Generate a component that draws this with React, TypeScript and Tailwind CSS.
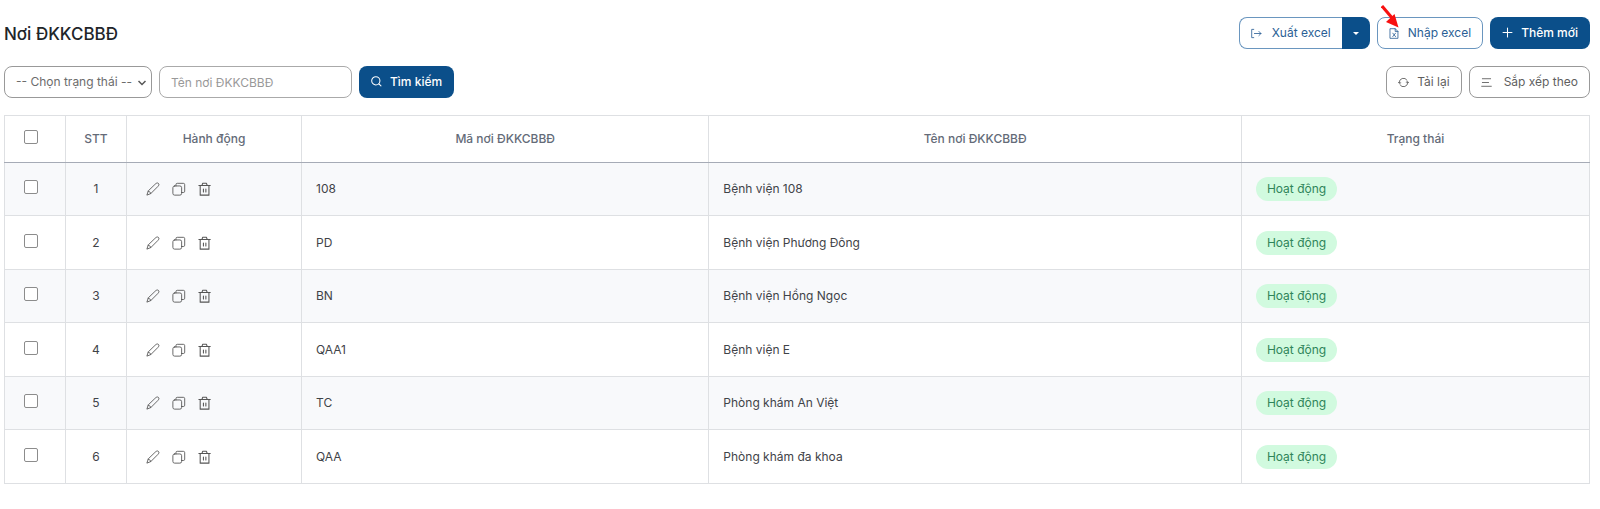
import React, { useState } from "react";

type Place = { id: number; code: string; name: string };

const PLACES: Place[] = [
  { id: 1, code: "108", name: "Bệnh viện 108" },
  { id: 2, code: "PD", name: "Bệnh viện Phương Đông" },
  { id: 3, code: "BN", name: "Bệnh viện Hồng Ngọc" },
  { id: 4, code: "QAA1", name: "Bệnh viện E" },
  { id: 5, code: "TC", name: "Phòng khám An Việt" },
  { id: 6, code: "QAA", name: "Phòng khám đa khoa" },
];

function Icon({ children, className = "size-3.5" }: { children: React.ReactNode; className?: string }) {
  return (
    <svg
      viewBox="0 0 16 16"
      className={`${className} shrink-0`}
      fill="none"
      stroke="currentColor"
      strokeLinecap="round"
      strokeLinejoin="round"
      aria-hidden="true"
    >
      {children}
    </svg>
  );
}

const ExportIcon = () => (
  <Icon className="size-[11px]">
    <path d="M4 2H1v12h3M5 8h9.500M11.500 5l3 3-3 3" strokeWidth="1.200" />
  </Icon>
);

const FileExcelIcon = () => (
  <Icon className="size-[11px]">
    <path d="M2 1h7l4 4v10H2zM9 1v4h4M5.500 7.500l4 5M9.500 7.500l-4 5" strokeWidth="1.200" />
  </Icon>
);

const PlusIcon = () => (
  <Icon className="size-[11px]">
    <path d="M8 1.500v13M1.500 8h13" strokeWidth="1.500" />
  </Icon>
);

const SearchIcon = () => (
  <Icon className="size-[11px]">
    <circle cx="7" cy="7" r="6" strokeWidth="1.500" />
    <path d="m11.500 11.500 3 3" strokeWidth="1.500" />
  </Icon>
);

const ReloadIcon = () => (
  <Icon className="size-[11px]">
    <path d="M1.800 8.500A6.200 6.200 0 0 1 13.200 4.700M14.200 7.500A6.200 6.200 0 0 1 2.800 11.300" strokeWidth="1.300" />
    <path d="m12 7.500 2.300-.5 1.200 1.500M.500 7.500l1.300 1.500 2.200-.5" strokeWidth="1.300" />
  </Icon>
);

const SortIcon = () => (
  <Icon className="size-[11px]">
    <path d="M2 2.500h12M2 8h9M1 13.500h14" strokeWidth="1.300" />
  </Icon>
);

const PencilIcon = () => (
  <Icon>
    <path d="M10.500 2.500c1.200-1.200 2.500-2 3.700-.9s.4 2.500-.8 3.700L5.500 13.200 1 15l1.500-4.500zM2.500 10.500c1.500.2 2.700 1.200 3 2.700" />
  </Icon>
);

const CopyIcon = () => (
  <Icon>
    <rect x="1" y="4.500" width="10" height="10.500" rx="2" />
    <path d="M4.500 4.500V3c0-1 .5-1.500 1.500-1.500h7c1 0 1.500.5 1.500 1.500v7.500c0 1-.5 1.500-1.500 1.500h-2" />
  </Icon>
);

const TrashIcon = () => (
  <Icon>
    <path d="M1 4h13M2.500 4v11h10V4M4.500 4l.8-2.500h4.400l.8 2.500M6.200 8v3.500M9 8v3.500" strokeWidth="1.200" />
  </Icon>
);

function Checkbox({ label }: { label: string }) {
  return (
    <input
      type="checkbox"
      aria-label={label}
      className="block size-3.5 mb-1 appearance-none rounded-xs border border-[#8c8c8c] bg-white checked:bg-[#0b4f8a]"
    />
  );
}

const outline = "flex h-8 items-center rounded-lg border bg-white px-[11px]";
const solid = "flex h-8 items-center gap-2 rounded-lg bg-[#0b4f8a] px-3 pb-px font-medium text-white";

export default function App() {
  const [status, setStatus] = useState("");
  const [keyword, setKeyword] = useState("");

  return (
    <div className="bg-white pl-1 pr-2.5 pb-6 font-[Inter,sans-serif] text-xs leading-5 text-[#3f4348]">
      <header className="flex items-start justify-between pt-4">
        <h1 className="pt-1 text-[17px] leading-7 font-medium text-[#212529]">Nơi ĐKKCBBĐ</h1>
        <div className="flex gap-[7px] pt-px text-[#2b5f95]">
          <div className="flex">
            <button
              type="button"
              className="flex h-8 items-center gap-2.5 rounded-l-lg border border-r-0 border-[#6a96bf] px-[11px]"
            >
              <ExportIcon />
              Xuất excel
            </button>
            <button
              type="button"
              aria-label="Tùy chọn xuất"
              className="flex h-8 w-7 items-center justify-center rounded-r-lg bg-[#0b4f8a] text-white"
            >
              <svg viewBox="0 0 6 3" className="h-[3px] w-1.5" fill="currentColor" aria-hidden="true">
                <path d="M0 0h6L3 3z" />
              </svg>
            </button>
          </div>
          <div className="relative">
            <button type="button" className={`${outline} gap-2 border-[#6a96bf]`}>
              <FileExcelIcon />
              Nhập excel
            </button>
            <svg viewBox="0 0 20 24" className="absolute -top-3 left-1 h-6 w-5" aria-hidden="true">
              <path d="m1 1 11 13" stroke="#f81010" strokeWidth="3" />
              <path d="M17.500 22.500 5 17l8.500-8z" fill="#f81010" />
            </svg>
          </div>
          <button type="button" className={solid}>
            <PlusIcon />
            Thêm mới
          </button>
        </div>
      </header>

      <div className="mt-[17px] flex items-center justify-between">
        <form className="flex gap-[7px]" onSubmit={(e) => e.preventDefault()}>
          <div className="relative">
            <select
              aria-label="Trạng thái"
              value={status}
              onChange={(e) => setStatus(e.target.value)}
              className="h-8 w-[148px] appearance-none rounded-lg border border-[#999] bg-white pl-[11px] text-[#6c6c6c]"
            >
              <option value="">-- Chọn trạng thái --</option>
              <option value="1">Hoạt động</option>
            </select>
            <svg
              viewBox="0 0 8 6"
              className="pointer-events-none absolute top-3.5 right-1.5 h-1.5 w-2"
              fill="none"
              stroke="#555"
              strokeWidth="1.500"
              aria-hidden="true"
            >
              <path d="m.5 1 3.500 3.500L7.500 1" />
            </svg>
          </div>
          <input
            type="text"
            aria-label="Tên nơi ĐKKCBBĐ"
            placeholder="Tên nơi ĐKKCBBĐ"
            value={keyword}
            onChange={(e) => setKeyword(e.target.value)}
            className="h-8 w-[193px] rounded-lg border border-[#aaa] px-[11px] placeholder:text-[#999]"
          />
          <button type="submit" className={solid}>
            <SearchIcon />
            Tìm kiếm
          </button>
        </form>
        <div className="flex gap-[7px] text-[#5f5f5f]">
          <button type="button" className={`${outline} gap-2 border-[#999]`}>
            <ReloadIcon />
            Tải lại
          </button>
          <button type="button" className={`${outline} gap-3 border-[#999]`}>
            <SortIcon />
            Sắp xếp theo
          </button>
        </div>
      </div>

      <table className="mt-[17px] w-full table-fixed border-collapse border border-[#dee0e3]">
        <colgroup>
          <col className="w-[61px]" />
          <col className="w-[61px]" />
          <col className="w-[175px]" />
          <col className="w-[25.700%]" />
          <col className="w-[33.600%]" />
          <col />
        </colgroup>
        <thead>
          <tr className="h-[47px] text-[#646b78] *:border *:border-[#dee0e3] *:border-b-[#a6abb6] *:font-medium">
            <th className="pl-[19px]">
              <Checkbox label="Chọn tất cả" />
            </th>
            <th>STT</th>
            <th>Hành động</th>
            <th>Mã nơi ĐKKCBBĐ</th>
            <th>Tên nơi ĐKKCBBĐ</th>
            <th>Trạng thái</th>
          </tr>
        </thead>
        <tbody>
          {PLACES.map((place) => (
            <tr
              key={place.id}
              className="h-[53px] odd:bg-[#f8f9fb] even:h-[54px] *:border-x *:border-b *:border-[#dee0e3]"
            >
              <td className="pl-[19px]">
                <Checkbox label={`Chọn ${place.name}`} />
              </td>
              <td className="text-center">{place.id}</td>
              <td className="pl-[19px]">
                <div className="flex gap-3 text-[#555]">
                  <button type="button" aria-label="Sửa">
                    <PencilIcon />
                  </button>
                  <button type="button" aria-label="Sao chép">
                    <CopyIcon />
                  </button>
                  <button type="button" aria-label="Xóa">
                    <TrashIcon />
                  </button>
                </div>
              </td>
              <td className="px-3.5">{place.code}</td>
              <td className="px-3.5">{place.name}</td>
              <td className="px-3.5">
                <span className="inline-block rounded-full bg-[#d1fadf] px-[11px] py-0.5 text-[#2f855a]">Hoạt động</span>
              </td>
            </tr>
          ))}
        </tbody>
      </table>
    </div>
  );
}
